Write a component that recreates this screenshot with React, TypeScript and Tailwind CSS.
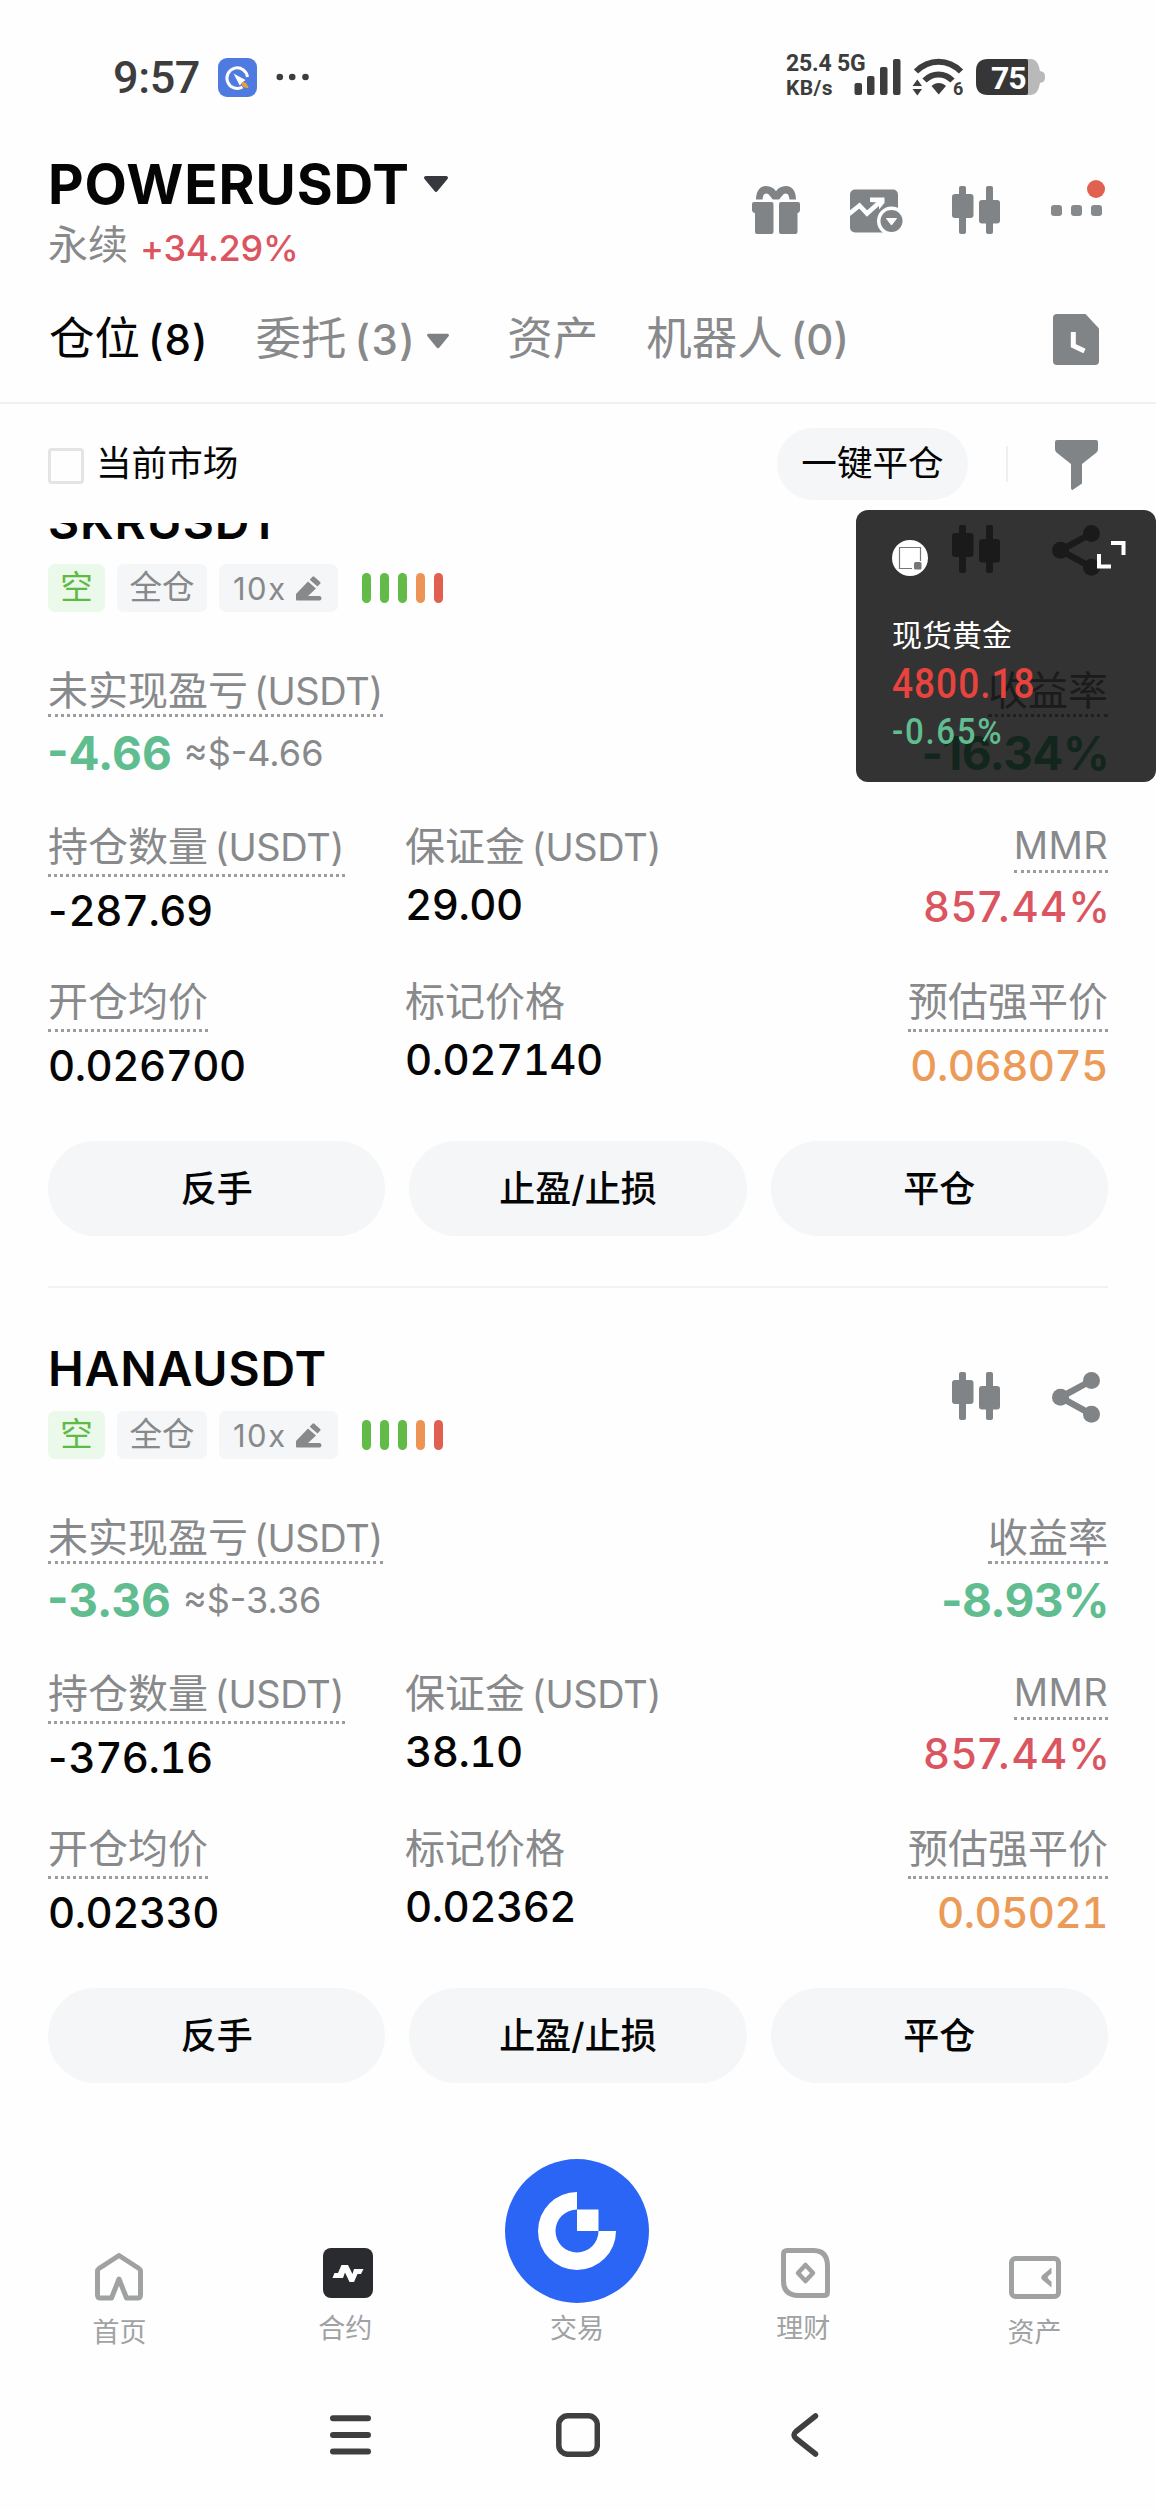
import React from 'react';

type Position = {
  symbol: string;
  pnl: string;
  roe: string;
  size: string;
  margin: string;
  mmr: string;
  entry: string;
  mark: string;
  liquidation: string;
};

const positions: Position[] = [
  {
    symbol: 'SKRUSDT',
    pnl: '-4.66',
    roe: '-16.34%',
    size: '287.69',
    margin: '29.00',
    mmr: '857.44%',
    entry: '0.026700',
    mark: '0.027140',
    liquidation: '0.068075',
  },
  {
    symbol: 'HANAUSDT',
    pnl: '-3.36',
    roe: '-8.93%',
    size: '376.16',
    margin: '38.10',
    mmr: '857.44%',
    entry: '0.02330',
    mark: '0.02362',
    liquidation: '0.05021',
  },
];

const CandleIcon = () => (
  <svg width="48" height="48" viewBox="0 0 48 48" fill="#808486">
    <rect x="7" y="0" width="7" height="48" rx="2" />
    <rect x="0" y="8" width="21.5" height="24" rx="3" />
    <rect x="34" y="0" width="7" height="48" rx="2" />
    <rect x="27" y="14" width="21" height="23.5" rx="3" />
  </svg>
);

const ShareIcon = () => (
  <svg width="48" height="51" viewBox="0 0 48 51" fill="#808486">
    <path d="M39.5 8.5 8.5 25.3 39.5 42.3" fill="none" stroke="#808486" strokeWidth="6.5" />
    <circle cx="39.5" cy="8.5" r="8.5" />
    <circle cx="8.5" cy="25.3" r="8.5" />
    <circle cx="39.5" cy="42.3" r="8.5" />
  </svg>
);

const GiftIcon = () => (
  <svg width="48" height="48" viewBox="0 0 48 48" fill="#808486">
    <path
      d="M4 13.6C4 5.5 7.500 0 14 0c4.500 0 8 2.200 10 5.200C26 2.200 29.500 0 34 0c6.500 0 10 5.500 10 13.600h-6.500c-.3-3.200-1.200-6-3.800-6-2.600 0-3.700 3-6.700 6h-6c-3-3-4.100-6-6.700-6-2.600 0-3.500 2.800-3.800 6Z"
    />
    <path d="M2 16h17.500a2 2 0 0 1 2 2v28a2 2 0 0 1-2 2H5a2 2 0 0 1-2-2V27c-2 0-3-1.500-3-3v-6a2 2 0 0 1 2-2Z" />
    <path d="M29 16h17a2 2 0 0 1 2 2v6c0 1.500-1 3-2.500 3v19a2 2 0 0 1-2 2H29a2 2 0 0 1-2-2V18a2 2 0 0 1 2-2Z" />
  </svg>
);

const ChartIcon = () => (
  <svg width="53" height="44" viewBox="0 0 53 44">
    <rect width="48" height="43" y="0.5" rx="5" fill="#808486" />
    <path d="M-1 25 9.500 16.500 17 24.500 31 12" fill="none" stroke="#fefefe" strokeWidth="4.500" />
    <path d="M20 8.500h14.500V14L29 20.500v-7l-9-.5Z" fill="#fefefe" />
    <circle cx="41.500" cy="32" r="14.500" fill="#fefefe" />
    <circle cx="41.500" cy="32" r="11" fill="#808486" />
    <path d="M36.500 29.500h10L41.500 36Z" fill="#fefefe" stroke="#fefefe" strokeWidth="1" strokeLinejoin="round" />
  </svg>
);

const Triangle = ({ className }: { className: string }) => (
  <svg width="24" height="16" viewBox="0 0 24 16" className={className} fill="currentColor">
    <path d="M2 0h20c1.800 0 2.500 1.600 1.500 2.900L13.500 15c-.8 1.200-2.200 1.200-3 0L.5 2.900C-.5 1.600.2 0 2 0Z" />
  </svg>
);

const EditIcon = () => (
  <svg width="26" height="25" viewBox="0 0 26 25" fill="#88898b">
    <path d="m16.500.7 1.200-.4 6.800 6-.2 1.200-2.800 3L13.700 3.700Z" />
    <path d="m12 5.500 8 7-8 7.500h11.500c2.600 0 2.600 4.600 0 4.600H1.500A1.500 1.500 0 0 1 0 23v-5Z" />
  </svg>
);

const StatusBar = () => (
  <div className="flex h-[154px] items-center text-[#3d3d3d]">
    <span className="ml-[113px] w-[88px] font-[Roboto] text-[45px] font-medium leading-none tracking-[-0.4px]">9:57</span>
    <svg className="ml-[17px]" width="39" height="39" viewBox="0 0 39 39">
      <rect width="39" height="39" rx="9" fill="#4f7be0" />
      <path d="M24.500 29A10.300 10.300 0 1 1 29.500 19" fill="none" stroke="#fff" strokeWidth="3" />
      <path d="m15.500 15.500 12 6.500-3 2.200-2.700 3.300Z" fill="#fff" />
      <path d="M24 24c3.500-.5 5.500 1.500 6.500 6-4 0-6.500-1-7-4.500Z" fill="#e8a03f" />
    </svg>
    <svg className="ml-[19px]" width="33" height="8" viewBox="0 0 33 8" fill="#3d3d3d">
      <circle cx="3.800" cy="4" r="3.300" />
      <circle cx="16.200" cy="4" r="3.300" />
      <circle cx="29.500" cy="4" r="3.300" />
    </svg>
    <div className="-mt-[4px] ml-[477px] flex w-[68px] flex-col whitespace-nowrap font-[Roboto] font-bold">
      <span className="text-[23px] leading-[26px] tracking-[-0.2px]">25.4 5G</span>
      <span className="text-[21px] leading-[23px] tracking-[0.4px]">KB/s</span>
    </div>
    <svg width="47" height="36" viewBox="0 0 47 36" fill="#3d3d3d">
      <rect x="0.500" y="24" width="7.500" height="12" rx="2" />
      <rect x="13" y="17" width="7.500" height="19" rx="2" />
      <rect x="26" y="8" width="7.500" height="28" rx="2" />
      <rect x="39" y="0" width="7.500" height="36" rx="2" />
    </svg>
    <svg className="ml-[11px]" width="53" height="38" viewBox="0 0 53 38" fill="#3d3d3d">
      <path d="M4 13.500C17 .5 36 .5 49 13.500" fill="none" stroke="#3d3d3d" strokeWidth="6" />
      <path d="M12.500 22.500c8-8 20-8 28 0" fill="none" stroke="#3d3d3d" strokeWidth="6" />
      <path d="M19.500 28c4-4 10.500-4 14.500 0L26.700 36.500Z" />
      <path d="m5.300 21.500 4.700 6.500H.6ZM5.300 37.500.6 31H10Z" />
      <text x="41" y="37" fontFamily="Roboto" fontSize="18" fontWeight="700">6</text>
    </svg>
    <svg className="ml-[11px]" width="70" height="36" viewBox="0 0 70 36">
      <path d="M50 0h5q7 0 9 12l3 1q2 1 2 5t-2 5l-3 1q-2 12-9 12h-5Z" fill="#b9b9b9" />
      <path d="M12 0h38a2 2 0 0 1 2 2v32a2 2 0 0 1-2 2H12Q0 36 0 24V12Q0 0 12 0Z" fill="#363636" />
      <text x="15" y="29.500" fontFamily="Roboto" fontSize="32" fontWeight="700" fill="#fff" letterSpacing="-1.200">75</text>
    </svg>
  </div>
);

const Header = () => (
  <div className="flex h-[116px] items-start justify-between pl-[48px]">
    <div>
      <div className="flex h-[60px] items-center text-[#050505]">
        <h1 className="text-[55px] font-bold leading-[60px] tracking-[0.85px]">POWERUSDT</h1>
        <Triangle className="ml-[14px] text-[#36383d]" />
      </div>
      <div className="mt-[7px] flex h-[48px] items-center whitespace-nowrap leading-[48px]">
        <span className="text-[40px] text-[#88898b]">永续</span>
        <span className="ml-[12px] mt-[5px] text-[36px] font-medium tracking-[-0.25px] text-[#db5561]">+34.29%</span>
      </div>
    </div>
    <div className="flex h-[112px] items-center pr-[54px]">
      <GiftIcon />
      <span className="ml-[50px] mt-px"><ChartIcon /></span>
      <span className="ml-[49px]"><CandleIcon /></span>
      <span className="relative ml-[51px] flex gap-[9px]">
        <i className="h-[11px] w-[11px] rounded-[3px] bg-[#868a8c]" />
        <i className="h-[11px] w-[11px] rounded-[3px] bg-[#868a8c]" />
        <i className="h-[11px] w-[11px] rounded-[3px] bg-[#868a8c]" />
        <i className="absolute -top-[25px] left-[36px] h-[18px] w-[18px] rounded-full bg-[#e0614f]" />
      </span>
    </div>
  </div>
);

const Tabs = () => (
  <div className="flex h-[134px] items-center whitespace-nowrap border-b-2 border-[#eff0f1] pl-[49px] pt-[6px] text-[45.500px] leading-[60px] text-[#88898b]">
    <div className="text-[#050505]">
      仓位<span className="ml-[8px] text-[42px] font-medium tracking-[1px]">(8)</span>
    </div>
    <div className="ml-[47px] flex items-center">
      <span>委托<span className="ml-[8px] text-[42px] font-medium tracking-[1.500px]">(3)</span></span>
      <Triangle className="ml-[11px] mt-1 w-[22px] text-[#7e8183]" />
    </div>
    <div className="ml-[58px]">资产</div>
    <div className="ml-[48px]">
      机器人<span className="ml-[8px] text-[42px] font-medium">(0)</span>
    </div>
    <svg className="ml-auto mr-[57px]" width="46" height="51" viewBox="0 0 46 51">
      <path d="M4 0h28.500L46 14.500V47a4 4 0 0 1-4 4H4a4 4 0 0 1-4-4V4a4 4 0 0 1 4-4Z" fill="#808486" />
      <path d="M20.300 18v13.700L31.500 37" fill="none" stroke="#fff" strokeWidth="5" />
    </svg>
  </div>
);

const FilterBar = () => (
  <div className="flex h-[119px] items-center pl-[48px] text-[35.600px] leading-[72px] text-[#050505]">
    <span className="mt-[4px] h-[36px] w-[36px] rounded-[4px] border-[3px] border-[#e3e4e6]" />
    <span className="ml-[12px]">当前市场</span>
    <button className="ml-auto h-[72px] w-[191px] rounded-full bg-[#f4f6f7]">一键平仓</button>
    <span className="ml-[38px] h-[36px] w-[2px] bg-[#eeeff1]" />
    <svg className="ml-[47px] mr-[58px] mt-[2px]" width="43" height="50" viewBox="0 0 43 50" fill="#808486">
      <path d="M2 0h39a2 2 0 0 1 2 2v7q0 2-1.500 3.500L27 24v19.500L17.500 50Q16 50 16 48V24L1.500 12.500Q0 11 0 9V2a2 2 0 0 1 2-2Z" />
    </svg>
  </div>
);

const Tags = () => (
  <div className="mt-[18px] flex h-[48px] items-center text-[32.500px] leading-[48px] text-[#88898b]">
    <span className="h-[48px] w-[57px] rounded-[7px] bg-[#ebf9eb] text-center text-[#5cba45]">空</span>
    <span className="ml-[12px] h-[48px] w-[90px] rounded-[7px] bg-[#f4f6f7] text-center">全仓</span>
    <span className="ml-[12px] flex h-[48px] w-[119px] items-center rounded-[7px] bg-[#f4f6f7] pl-[14px] text-[31px]">
      <span className="w-[54px] pt-[2px] tracking-[1.500px]">10x</span>
      <span className="ml-[9px]"><EditIcon /></span>
    </span>
    <div className="ml-[24px] flex gap-[9px]">
      <i className="h-[30px] w-[9px] rounded-full bg-[#62bb47]" />
      <i className="h-[30px] w-[9px] rounded-full bg-[#62bb47]" />
      <i className="h-[30px] w-[9px] rounded-full bg-[#62bb47]" />
      <i className="h-[30px] w-[9px] rounded-full bg-[#ed9355]" />
      <i className="h-[30px] w-[9px] rounded-full bg-[#e05f50]" />
    </div>
  </div>
);

const Usdt = () => <span className="ml-[6px] text-[38px] tracking-[-0.400px]">(USDT)</span>;

const PositionCard = ({ p }: { p: Position }) => (
  <section className="mx-[48px] h-[847px] border-t-2 border-[#f1f2f3] text-[#050505]">
    <div className="flex justify-between pt-[57px]">
      <div>
        <h2 className="text-[48px] font-semibold leading-[48px] tracking-[0.800px]">{p.symbol}</h2>
        <Tags />
      </div>
      <div className="flex gap-[52px] pr-[8px] pt-[27px]">
        <CandleIcon />
        <ShareIcon />
      </div>
    </div>

    <div className="mt-[52px] flex justify-between whitespace-nowrap">
      <div>
        <div className="h-[53px] w-fit border-b-3 border-dotted border-[#9b9c9e] text-[40px] leading-[53px] text-[#88898b]">
          未实现盈亏<Usdt />
        </div>
        <div className="mt-[12px] flex h-[48px] items-center leading-[48px]">
          <span className="-ml-px text-[46px] font-bold text-[#5fbd90]">{p.pnl}</span>
          <span className="ml-[12px] text-[36px] text-[#88898b]">≈${p.pnl}</span>
        </div>
      </div>
      <div className="flex flex-col items-end">
        <div className="h-[53px] border-b-3 border-dotted border-[#9b9c9e] text-[40px] leading-[53px] text-[#88898b]">收益率</div>
        <div className="-mr-[1px] mt-[12px] text-[46px] font-bold leading-[48px] tracking-[-0.600px] text-[#5fbd90]">{p.roe}</div>
      </div>
    </div>

    <div className="mt-[39px] grid grid-cols-[357px_1fr_auto] whitespace-nowrap text-[42px] font-medium leading-[48px] tracking-[-0.500px] tabular-nums">
      <div>
        <div className="h-[61px] w-fit border-b-3 border-dotted border-[#9b9c9e] text-[40px] font-normal leading-[61px] tracking-normal text-[#88898b]">
          持仓数量<Usdt />
        </div>
        <div className="mt-[10px]"><span className="tracking-[1px] proportional-nums">-</span>{p.size}</div>
      </div>
      <div>
        <div className="h-[58px] text-[40px] font-normal leading-[61px] tracking-normal text-[#88898b]">
          保证金<Usdt />
        </div>
        <div className="mt-[7px]">{p.margin}</div>
      </div>
      <div className="flex flex-col items-end">
        <div className="h-[57px] border-b-3 border-dotted border-[#9b9c9e] text-[38px] font-normal leading-[58px] tracking-[0.400px] text-[#88898b]">MMR</div>
        <div className="-mr-[3px] mt-[10px] tracking-[1px] text-[#db5561] proportional-nums">{p.mmr}</div>
      </div>
    </div>

    <div className="mt-[36px] grid grid-cols-[357px_1fr_auto] whitespace-nowrap text-[42px] font-medium leading-[48px] tracking-[-0.500px] tabular-nums">
      <div>
        <div className="h-[61px] w-fit border-b-3 border-dotted border-[#9b9c9e] text-[40px] font-normal leading-[61px] tracking-normal text-[#88898b]">
          开仓均价
        </div>
        <div className="mt-[10px]">{p.entry}</div>
      </div>
      <div>
        <div className="h-[58px] text-[40px] font-normal leading-[61px] tracking-normal text-[#88898b]">标记价格</div>
        <div className="mt-[7px]">{p.mark}</div>
      </div>
      <div className="flex flex-col items-end">
        <div className="h-[61px] border-b-3 border-dotted border-[#9b9c9e] text-[40px] font-normal leading-[61px] tracking-normal text-[#88898b]">
          预估强平价
        </div>
        <div className="mt-[10px] text-[#eb9a57]">{p.liquidation}</div>
      </div>
    </div>

    <div className="mt-[51px] grid grid-cols-3 gap-[24px] text-[36px] font-medium">
      <button className="h-[95px] rounded-full bg-[#f4f6f7]">反手</button>
      <button className="h-[95px] rounded-full bg-[#f4f6f7]">止盈/止损</button>
      <button className="h-[95px] rounded-full bg-[#f4f6f7]">平仓</button>
    </div>
  </section>
);

const GoldWidget = () => (
  <aside className="absolute right-0 top-[510px] h-[272px] w-[300px] rounded-[12px] bg-black/80 pl-[36px]">
    <div className="flex items-start justify-between pr-[30px] pt-[30px]">
      <svg width="36" height="36" viewBox="0 0 36 36">
        <circle cx="18" cy="18" r="18" fill="#fff" />
        <path d="M20 28.500H7.500v-21h21V21" fill="none" stroke="#777" strokeWidth="1.200" />
        <rect x="22" y="22" width="7.500" height="7.500" rx="1.500" fill="#777" />
      </svg>
      <svg className="mt-px" width="30" height="28" viewBox="0 0 30 28" fill="none" stroke="#fff" strokeWidth="4">
        <path d="M15 2h12.500v12M3 13v12.500h12" />
      </svg>
    </div>
    <div className="mt-[39px] text-[30px] leading-[40px] text-white">现货黄金</div>
    <div className="mt-[5px] w-fit origin-left scale-x-[0.86] font-[Roboto] text-[43px] font-medium leading-[46px] tracking-[1.200px] text-[#e8433f]">4800.18</div>
    <div className="mt-[4px] w-fit origin-left scale-x-[0.92] font-[Roboto] text-[36px] font-medium leading-[44px] tracking-[1.800px] text-[#5fbd90]">-0.65%</div>
  </aside>
);

const BottomNav = () => (
  <nav className="ml-[5px] mr-[7px] grid h-[205px] grid-cols-5 whitespace-nowrap text-[27px] leading-[32px] text-[#a0a2a4]">
    <div className="flex flex-col items-center pt-[113px]">
      <svg width="48" height="48" viewBox="0 0 48 48" fill="none" stroke="#a0a2a2" strokeWidth="5" strokeLinejoin="round">
        <path d="M24 2.500 44 15.500q1.500 1 1.500 3V42q0 3-3 3H31.500L24 26 16.500 45H5.500q-3 0-3-3V18.500q0-2 1.500-3Z" />
      </svg>
      <span className="mt-[16px]">首页</span>
    </div>
    <div className="flex flex-col items-center pt-[108px]">
      <svg width="50" height="50" viewBox="0 0 50 50">
        <rect width="50" height="50" rx="8" fill="#2a2b2f" />
        <path d="M9.500 30 11.500 25H15l3.500-8H25l4.500 9 1.500-5h9.500l-2.500 5h-3.500L31 34h-4.500L22 24.500 20 30Z" fill="#fff" />
      </svg>
      <span className="mr-[6px] mt-[15px]">合约</span>
    </div>
    <div className="flex flex-col items-center pt-[19px]">
      <svg width="144" height="144" viewBox="0 0 144 144" className="shrink-0">
        <circle cx="72" cy="72" r="72" fill="#2b65f6" />
        <path d="M72 33a39 39 0 1 0 39 39H93.500A21.500 21.500 0 1 1 72 50.500Z" fill="#fff" />
        <path d="M72 50.500h21.500V72H72Z" fill="#fff" />
      </svg>
      <span className="mt-[10px]">交易</span>
    </div>
    <div className="flex flex-col items-center pt-[108px]">
      <svg width="49" height="50" viewBox="0 0 49 50" fill="none" stroke="#a0a2a2" strokeWidth="5">
        <path d="M6.500 2.500H33Q46.500 3 46.500 18V44q0 3.500-3.500 3.500H17Q2.500 47 2.500 33V6q0-3.500 4-3.500Z" />
        <path d="m24.500 17 7.500 8-7.500 8L17 25Z" strokeWidth="4.500" strokeLinejoin="round" />
      </svg>
      <span className="mr-[5px] mt-[15px]">理财</span>
    </div>
    <div className="flex flex-col items-center pt-[116px]">
      <svg width="52" height="43" viewBox="0 0 52 43">
        <rect x="2.500" y="2.500" width="47" height="38" rx="4" fill="none" stroke="#a0a2a2" strokeWidth="5" />
        <path d="M42.500 11.500v6q-3 2-4 4 1 2 4 4v6L33 23.500q-1.500-2 0-4Z" fill="#a0a2a2" />
      </svg>
      <span className="mt-[18px]">资产</span>
    </div>
  </nav>
);

const SystemNav = () => (
  <div className="flex h-[165px] items-center pt-[15px]">
    <svg className="ml-[329px]" width="42" height="40" viewBox="0 0 42 40" stroke="#3f3f3f" strokeWidth="6" strokeLinecap="round">
      <path d="M4 3.300h35M4 20h35M4 36.500h35" />
    </svg>
    <svg className="ml-[185px]" width="44" height="44" viewBox="0 0 44 44" fill="none" stroke="#3f3f3f" strokeWidth="5.500">
      <rect x="2.800" y="2.800" width="38.500" height="38.500" rx="9" />
    </svg>
    <svg className="ml-[191px]" width="28" height="44" viewBox="0 0 28 44" fill="none" stroke="#3f3f3f" strokeWidth="5.500" strokeLinecap="round" strokeLinejoin="round">
      <path d="M24.500 3 5 18.500q-4 3.500 0 7L24.500 41" />
    </svg>
  </div>
);

export default function App() {
  return (
    <div className="relative flex h-[2510px] w-[1156px] flex-col overflow-hidden bg-[#fefefe] font-[Inter,'Noto_Sans_CJK_SC',sans-serif]">
      <StatusBar />
      <Header />
      <Tabs />
      <FilterBar />
      <main className="h-[1617px] shrink-0 overflow-hidden">
        <div className="-mt-[84px]">
          {positions.map((p) => (
            <PositionCard key={p.symbol} p={p} />
          ))}
        </div>
      </main>
      <BottomNav />
      <SystemNav />
      <GoldWidget />
    </div>
  );
}
